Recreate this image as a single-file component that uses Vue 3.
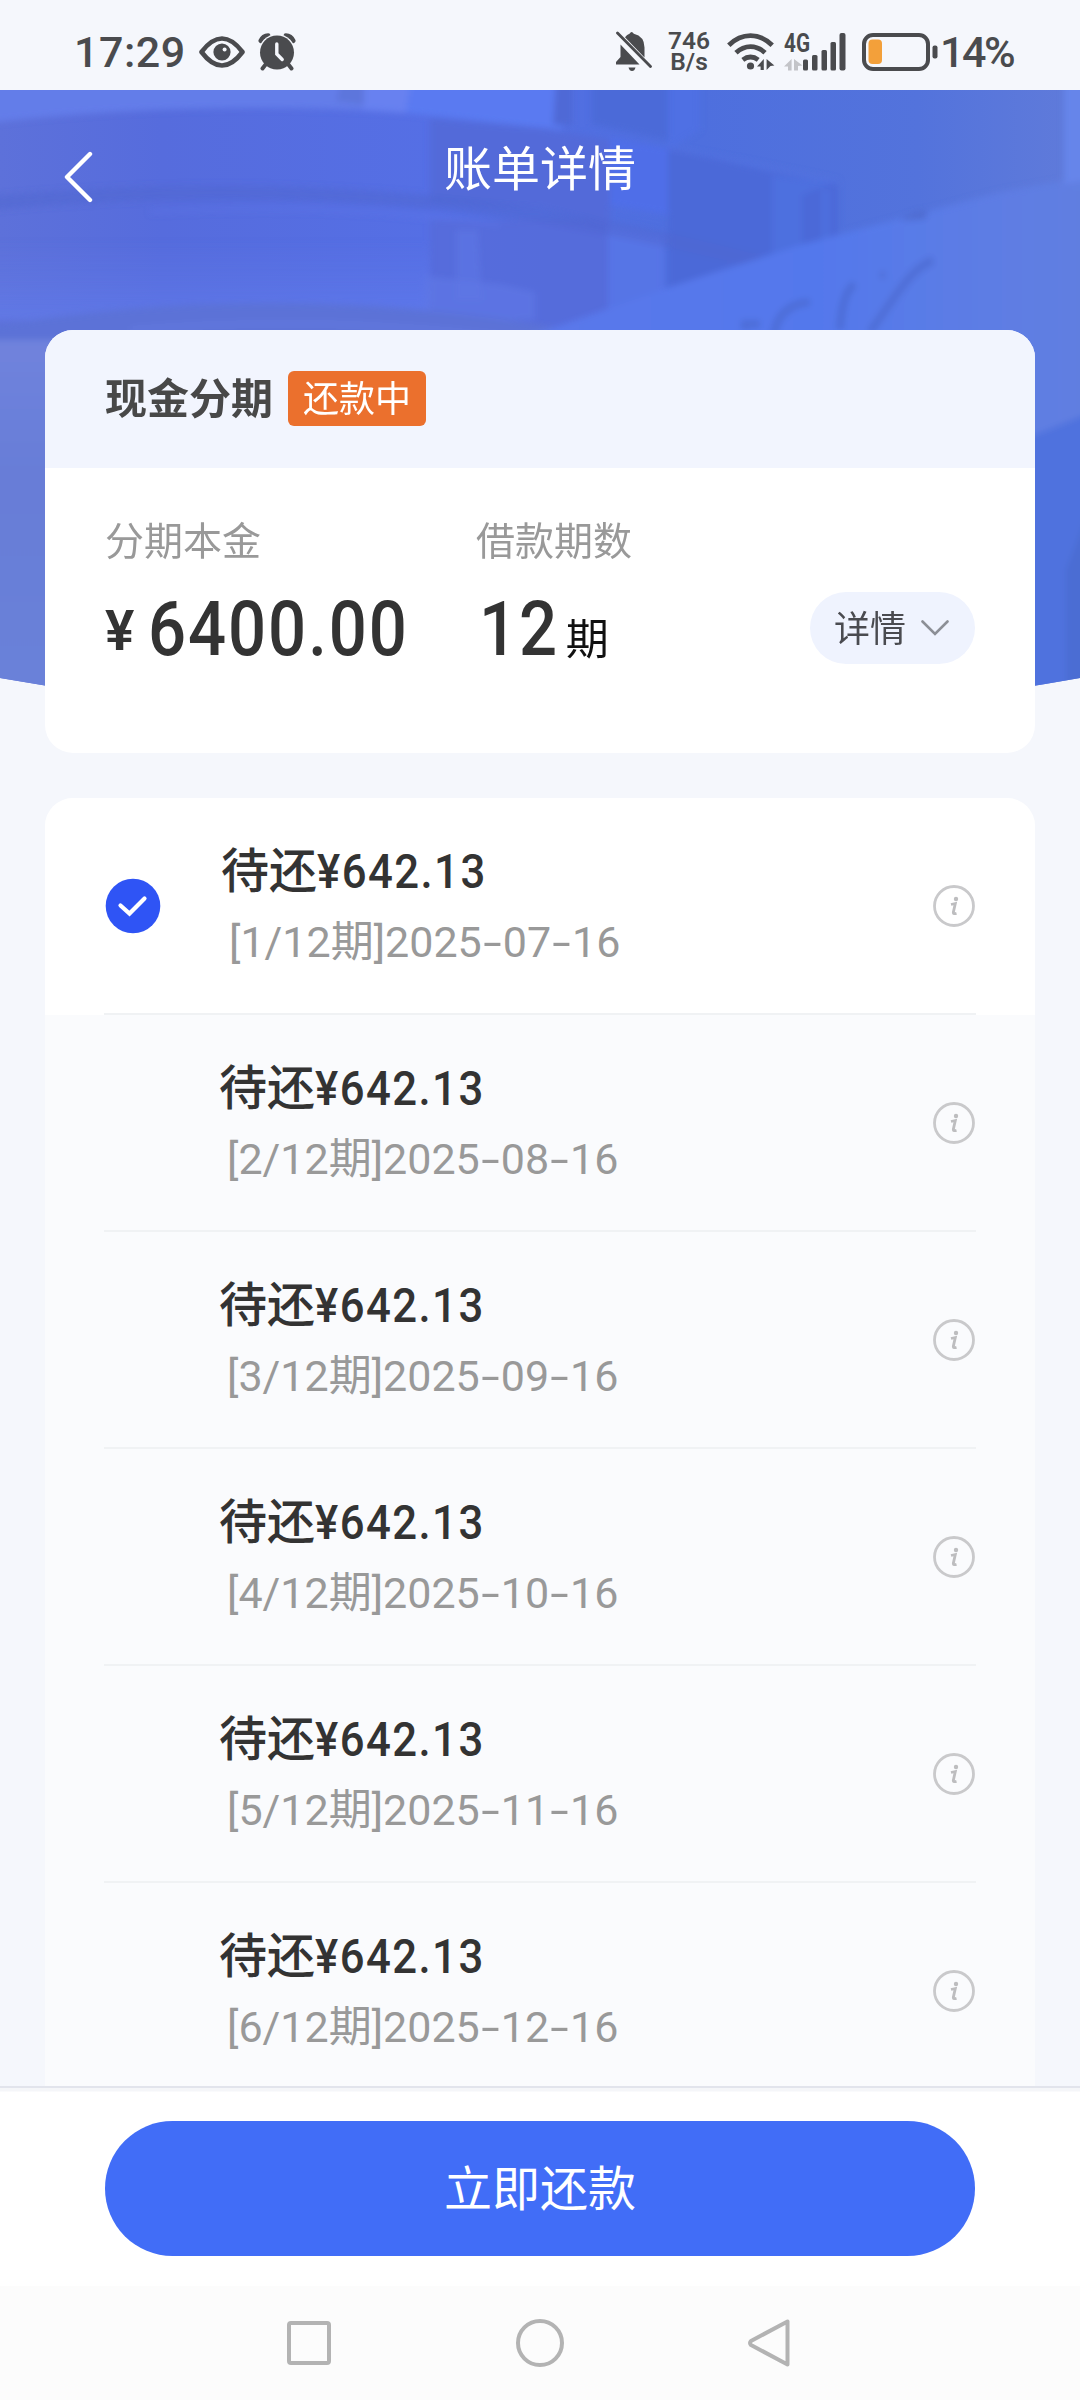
<script setup>

import { ref } from 'vue';

const bills = ref([]);

for (let i = 1; i <= 6; i++) {
    const month = String(i + 6).padStart(2, '0');
    bills.value.push({
        term: i,
        amount: '642.13',
        year: '2025',
        month: month,
        day: '16',
        checked: i === 1
    });
}

const handleSelect = (bill) => {
    bill.checked = !bill.checked;
}
</script>

<template>
    <div class="page">
        <div class="status-bar">
            <span class="time">17:29</span>
            <svg class="eye" width="46" height="32" viewBox="0 0 46 32">
                <path d="M2.5 16C10 6 17 2.5 23 2.5S36 6 43.5 16C36 26 29 29.5 23 29.5S10 26 2.5 16Z" fill="none" stroke="#4a4b4e" stroke-width="4.6" stroke-linejoin="round" />
                <circle cx="23" cy="16" r="8.6" fill="#4a4b4e" />
                <circle cx="25.6" cy="13.4" r="2" fill="#f5f7fc" />
            </svg>
            <svg class="alarm" width="38" height="38" viewBox="0 0 38 38">
                <path d="M2.8 7.8Q5 2.8 10.2 2.6M35.2 7.8Q33 2.8 27.8 2.6" fill="none" stroke="#4a4b4e" stroke-width="4.6" stroke-linecap="round" />
                <circle cx="19" cy="19.5" r="18.4" fill="#f5f7fc" />
                <path d="M8 31L4.5 35.5M30 31L33.5 35.5" stroke="#4a4b4e" stroke-width="4" stroke-linecap="round" />
                <circle cx="19" cy="19.5" r="17" fill="#4a4b4e" />
                <path d="M18.8 11V21L24.2 26.5" fill="none" stroke="#f5f7fc" stroke-width="3.4" stroke-linecap="round" />
            </svg>
            <span class="spacer"></span>
            <svg class="bell" width="36" height="41" viewBox="0 0 36 41">
                <path d="M4.5 13.5L23.5 33.5H0V31L4.5 26Z" fill="#4a4b4e" />
                <path d="M9 6.2Q11 3.5 13.5 2.8Q15.6-1 17.8 2.8Q28.5 5.5 28.5 16.5V26.5Z" fill="#4a4b4e" />
                <path d="M12.5 36.5H19.5Q18.5 40 16 40T12.5 36.5Z" fill="#4a4b4e" />
                <path d="M1.5 2L34.5 35.5" stroke="#4a4b4e" stroke-width="2.8" stroke-linecap="round" />
            </svg>
            <div class="speed">
                <span>746</span>
                <span>B/s</span>
            </div>
            <svg class="wifi" width="48" height="38" viewBox="0 0 48 38">
                <g fill="none" stroke="#4a4b4e" stroke-width="4.8">
                    <path d="M1.8 12.2Q11.5 2.6 23.5 2.6T45.2 12.2" />
                    <path d="M9 19.8Q15.5 13.6 23.5 13.6T38 19.8" />
                    <path d="M15.8 26.8Q19.5 24 23.5 24T31.2 26.8" />
                </g>
                <circle cx="23.5" cy="33" r="3.6" fill="#4a4b4e" />
                <path d="M36.8 26V37H33.6V33.5H30L36.8 26ZM39.6 26L47.4 32.5L43.5 33L39.6 37Z" fill="#4a4b4e" />
            </svg>
            <svg class="signal" width="62" height="38" viewBox="0 0 62 38">
                <text x="0" y="18.5" class="net" textLength="26" lengthAdjust="spacingAndGlyphs">4G</text>
                <path d="M7.6 26V37.5H4V33.5H0L7.6 26ZM10 26L18.5 32.5L14 33V37.5H10Z" fill="#c3c4c8" />
                <g fill="#4a4b4e">
                    <rect x="19" y="26.5" width="5" height="11" rx="1.5" />
                    <rect x="28" y="22" width="5.5" height="15.5" rx="1.5" />
                    <rect x="37.5" y="17" width="5.5" height="20.5" rx="1.5" />
                    <rect x="46.5" y="9" width="5.5" height="28.5" rx="1.5" />
                    <rect x="55.5" y="0" width="6" height="37.5" rx="2" />
                </g>
            </svg>
            <svg class="battery" width="77" height="38" viewBox="0 0 77 38">
                <rect x="2" y="2" width="64" height="34" rx="9" fill="none" stroke="#4a4b4e" stroke-width="4" />
                <rect x="6.5" y="6.5" width="13.5" height="24.5" rx="4" fill="#f3a03a" />
                <rect x="70.5" y="12.5" width="5" height="13" rx="2" fill="#4a4b4e" />
            </svg>
            <span class="percent">14%</span>
        </div>

        <div class="header">
            <svg class="header-bg" width="1080" height="640" viewBox="0 90 1080 640">
                <defs>
                    <linearGradient id="base" x1="0" x2="1" y1="0" y2="0">
                        <stop offset="0" stop-color="#5d71da" />
                        <stop offset="0.15" stop-color="#566cdd" />
                        <stop offset="0.4" stop-color="#556fe5" />
                        <stop offset="0.65" stop-color="#4e6fde" />
                        <stop offset="0.85" stop-color="#5373dc" />
                        <stop offset="1" stop-color="#607bda" />
                    </linearGradient>
                    <linearGradient id="glow" x1="0" x2="0" y1="0" y2="1">
                        <stop offset="0" stop-color="#6680f0" stop-opacity="0" />
                        <stop offset="1" stop-color="#6680f0" stop-opacity="0.5" />
                    </linearGradient>
                    <linearGradient id="wall" x1="0" x2="1" y1="0" y2="0">
                        <stop offset="0" stop-color="#5b78ea" />
                        <stop offset="0.5" stop-color="#5378ec" />
                        <stop offset="0.8" stop-color="#5d7de4" />
                        <stop offset="1" stop-color="#617fe0" />
                    </linearGradient>
                    <linearGradient id="left-side" x1="0" x2="0" y1="0" y2="1">
                        <stop offset="0" stop-color="#7083dd" />
                        <stop offset="0.35" stop-color="#677dd7" />
                        <stop offset="1" stop-color="#6b83da" />
                    </linearGradient>
                    <clipPath id="arc">
                        <path d="M0 90H1080V678Q540 774 0 678Z" />
                    </clipPath>
                    <filter id="soft" x="-5%" y="-5%" width="110%" height="110%">
                        <feGaussianBlur stdDeviation="3" />
                    </filter>
                </defs>
                <g clip-path="url(#arc)">
                    <rect y="90" width="1080" height="640" fill="url(#base)" />
                    <g filter="url(#soft)">
                        <path d="M-20 70H412L406 112Q180 100 -20 124Z" fill="#637de9" />
                        <path d="M412 70H562V130L406 113Z" fill="#5a7af1" />
                        <path d="M366 70H413L406 113L362 110Z" fill="#6881f0" />
                        <path d="M342 80H364V105L336 101Z" fill="#5d76dc" />
                        <path d="M556 80H572V125H553Z" fill="#5069d6" />
                        <path d="M592 80H668V140L592 124Z" fill="#4c6ad8" />
                        <path d="M430 118L540 128L610 140V225L540 208L430 202Z" fill="#526bd9" />
                        <path d="M610 138L668 148V215L610 205Z" fill="#506ee8" />
                        <path d="M668 80H700V130L668 150Z" fill="#5071ea" opacity="0.5" />
                        <path d="M668 147L770 172L838 184V242L668 292Z" fill="#4c69d8" />
                        <path d="M772 176L835 182L802 195V248L772 255Z" fill="#4e70df" />
                        <path d="M822 190H829V240H822Z" fill="#5071df" />
                        <path d="M668 148Q760 165 838 182" fill="none" stroke="#5674e3" stroke-width="3" opacity="0.7" />
                        <path d="M430 220H610V330H430Z" fill="#566ada" opacity="0.8" />
                        <path d="M-20 240H430V320H-20Z" fill="url(#glow)" />
                        <path d="M608 225L664 236V330H608Z" fill="#5775e6" />
                        <path d="M456 230H478L482 300H456Z" fill="#5d76e4" opacity="0.7" />
                        <path d="M425 276L500 284L535 292V320H425Z" fill="#6078e5" opacity="0.7" />
                        <path d="M-20 204Q210 182 430 202Q570 214 760 262" fill="none" stroke="#4e66d0" stroke-width="14" opacity="0.5" />
                        <path d="M150 212Q350 202 500 226" fill="none" stroke="#5f78ec" stroke-width="4" opacity="0.4" />
                        <path d="M-20 328Q270 278 560 328V370H-20Z" fill="#5c72d7" />
                        <path d="M130 330Q350 312 560 345" fill="none" stroke="#6279e0" stroke-width="8" opacity="0.6" />
                        <path d="M530 336L670 287L800 245L1000 192L1100 174V800H530Z" fill="url(#wall)" />
                        <path d="M1064 80H1100V178L1064 184Z" fill="#6685ea" />
                        <path d="M900 221Q915 210 928 211L925 219Z" fill="#4d69ca" opacity="0.8" />
                        <g fill="none" stroke="#4c69d0" stroke-width="8" opacity="0.7">
                            <path d="M745 330V324H760M774 335Q778 305 810 302M840 330Q842 292 855 284" />
                            <path d="M870 332C900 290 910 270 933 260M880 275H885" />
                        </g>
                        <path d="M-20 340H60V750H-20Z" fill="url(#left-side)" />
                        <path d="M1020 440Q1050 430 1100 408V750H1020Z" fill="#4f72de" />
                        <path d="M1066 570V690H1100V480Z" fill="#4c6dd3" />
                    </g>
                </g>
            </svg>
            <div class="nav">
                <svg class="back" width="30" height="54" viewBox="0 0 30 54">
                    <path d="M26 4L3 27L26 50" fill="none" stroke="#fff" stroke-width="4.4" stroke-linecap="round" stroke-linejoin="round" />
                </svg>
                <div class="title">账单详情</div>
            </div>
        </div>

        <div class="summary">
            <div class="summary-header">
                <span class="product">现金分期</span>
                <span class="badge">还款中</span>
            </div>
            <div class="summary-body">
                <div class="item principal">
                    <div class="label">分期本金</div>
                    <div class="value">
                        <span class="yen">¥</span>
                        <span class="digits">6400.00</span>
                    </div>
                </div>
                <div class="item">
                    <div class="label">借款期数</div>
                    <div class="value periods">
                        <span class="digits">12</span>
                        <span class="unit">期</span>
                    </div>
                </div>
                <div class="detail-btn">
                    <span>详情</span>
                    <svg width="28" height="17" viewBox="0 0 28 17">
                        <path d="M1.5 1.5L14 14L26.5 1.5" fill="none" stroke="#8c8f96" stroke-width="2.6" stroke-linecap="round" />
                    </svg>
                </div>
            </div>
        </div>

        <div class="list">
            <div v-for="(bill, index) in bills" :key="bill.term" class="row" :class="{ current: index === 0 }" @click="handleSelect(bill)">
                <div class="check">
                    <svg v-if="bill.checked" width="56" height="56" viewBox="0 0 56 56">
                        <circle cx="28" cy="28" r="27.3" fill="#2f54f5" />
                        <path d="M15.5 27.5L24.5 35.5L39.5 20.5" fill="none" stroke="#fff" stroke-width="4.2" stroke-linecap="round" />
                    </svg>
                </div>
                <div class="info">
                    <div class="amount">待还<span class="num">¥{{ bill.amount }}</span></div>
                    <div class="term">[{{ bill.term }}/12期]{{ bill.year }}<i class="dash">-</i>{{ bill.month }}<i class="dash">-</i>{{ bill.day }}</div>
                </div>
                <svg class="tip" width="42" height="42" viewBox="0 0 42 42">
                    <circle cx="21" cy="21" r="19.5" fill="none" stroke="#c9c9cb" stroke-width="2.8" />
                    <circle cx="23" cy="14" r="2.2" fill="#bdbdbf" />
                    <path d="M18 19.5L22.3 18.5L20.3 27.5Q20.2 29.3 23.5 28.3" fill="none" stroke="#bdbdbf" stroke-width="2.8" />
                </svg>
            </div>
        </div>

        <div class="footer">
            <div class="pay-btn">立即还款</div>
        </div>

        <div class="system-nav">
            <svg width="50" height="50" viewBox="0 0 50 50">
                <rect x="5" y="5" width="40" height="40" rx="2" />
            </svg>
            <svg width="50" height="50" viewBox="0 0 50 50">
                <circle cx="25" cy="25" r="22" />
            </svg>
            <svg width="50" height="50" viewBox="0 0 50 50">
                <path d="M41.5 3.5V46.5L5 27Q3 25 5 23Z" />
            </svg>
        </div>
    </div>
</template>

<style>
body {
    margin: 0;
    background: #f5f7fc;
}
</style>

<style scoped>
.page {
    display: flex;
    flex-direction: column;
    width: 1080px;
    height: 2400px;
    overflow: hidden;
    background: #f5f7fc;
    color: #333;
    font-family: Roboto, 'Noto Sans CJK SC', sans-serif;
}

/* status bar */
.status-bar {
    display: flex;
    align-items: center;
    box-sizing: border-box;
    height: 90px;
    padding: 13px 65px 0 74px;
    flex-shrink: 0;
    color: #4a4b4e;
}
.time {
    width: 125px;
    font-size: 43px;
    font-weight: 500;
    letter-spacing: 0.5px;
    line-height: 50px;
}
.alarm {
    margin-left: 13px;
}
.spacer {
    flex: 1;
}
.speed {
    display: flex;
    flex-direction: column;
    align-items: center;
    width: 44px;
    margin-left: 15px;
    margin-right: 1px;
    font-size: 24.5px;
    font-weight: 600;
    line-height: 20.5px;
}
.wifi {
    margin-left: 15px;
}
.signal {
    margin-left: 9px;
    margin-right: 1px;
    overflow: visible;
}
.net {
    font-size: 25px;
    font-weight: 700;
    fill: #4a4b4e;
}
.battery {
    margin-left: 15px;
}
.percent {
    width: 75px;
    margin-left: 1px;
    font-size: 43px;
    font-weight: 500;
    letter-spacing: -2.5px;
    line-height: 50px;
    white-space: nowrap;
}

/* header */
.header {
    position: relative;
    height: 240px;
    flex-shrink: 0;
}
.header-bg {
    position: absolute;
    top: 0;
    left: 0;
}
.nav {
    position: relative;
    display: grid;
    grid-template-columns: 1fr auto 1fr;
    align-items: center;
    height: 158px;
}
.back {
    margin: 15px 0 0 64px;
}
.title {
    padding-top: 1px;
    color: #fff;
    font-size: 48px;
    line-height: 64px;
}

/* summary card */
.summary {
    position: relative;
    height: 423px;
    margin: 0 45px;
    flex-shrink: 0;
    border-radius: 28px;
    overflow: hidden;
    background: #fff;
}
.summary-header {
    display: flex;
    align-items: center;
    box-sizing: border-box;
    height: 138px;
    padding: 0 60px;
    background: #f2f5fe;
}
.product {
    padding-top: 2px;
    color: #484848;
    font-size: 42px;
    font-weight: 700;
    line-height: 56px;
}
.badge {
    height: 55px;
    margin: -1px 0 0 15px;
    padding: 0 15px;
    border-radius: 6px;
    background: #eb702d;
    color: #fff;
    font-size: 36px;
    line-height: 58px;
}
.summary-body {
    display: flex;
    padding: 46px 60px 0;
}
.principal {
    width: 371px;
}
.label {
    color: #999;
    font-size: 39px;
    line-height: 56px;
}
.value {
    display: flex;
    align-items: baseline;
    height: 90px;
    margin-top: 14px;
    font-weight: 500;
    line-height: 90px;
    white-space: nowrap;
}
/* narrow figures */
.digits {
    font-size: 76px;
    letter-spacing: 2.2px;
    transform: scaleX(0.882);
    transform-origin: 0 50%;
}
.yen {
    width: 43px;
    font-size: 55px;
    font-weight: 600;
    transform: translateY(-5px);
    transform-origin: 0 50%;
}
.periods {
    padding-left: 3px;
}
.unit {
    margin-left: -4px;
    color: #111;
    font-size: 43px;
    font-weight: 400;
}
.detail-btn {
    display: flex;
    align-items: center;
    box-sizing: border-box;
    width: 165px;
    height: 72px;
    margin: 78px 0 0 auto;
    padding: 0 26px 0 24px;
    justify-content: space-between;
    border-radius: 36px;
    background: #eff3fe;
    color: #4a4b50;
    font-size: 36px;
    line-height: 52px;
}
.detail-btn span {
    padding-top: 3px;
}

/* bills */
.list {
    flex: 1;
    min-height: 0;
    margin: 45px 45px 0;
    border-radius: 28px 28px 0 0;
    overflow: hidden;
    background: #fafbfd;
}
.row {
    position: relative;
    display: flex;
    align-items: center;
    box-sizing: border-box;
    height: 217px;
    padding: 0 60px;
}
.row::after {
    position: absolute;
    right: 59px;
    bottom: 0;
    left: 59px;
    height: 2px;
    background: #f0f2f4;
    content: '';
}
.row.current {
    background: #fff;
}
.check {
    width: 114px;
    height: 56px;
    margin-bottom: 1px;
}
.current .check {
    width: 116px;
}
.tip {
    margin-bottom: 2px;
}
.info {
    flex: 1;
    padding-top: 2px;
}
.amount {
    font-size: 48px;
    font-weight: 500;
    line-height: 70px;
}
.num {
    display: inline-block;
    letter-spacing: 1.6px;
    transform: scaleX(0.91);
    transform-origin: 0 50%;
}
.term {
    padding-left: 8px;
    color: #999;
    font-size: 43px;
    line-height: 71px;
}
.dash {
    display: inline-block;
    width: 21px;
    font-style: normal;
    text-align: center;
    transform: scaleX(1.55);
}

/* footer */
.footer {
    box-sizing: border-box;
    height: 200px;
    padding: 33px 105px 0;
    flex-shrink: 0;
    border-top: 2px solid #e2e4ec;
    background: linear-gradient(#f5f6f9 0, #f5f6f9 3px, #fff 4px);
}
.pay-btn {
    height: 135px;
    border-radius: 68px;
    background: #416df7;
    color: #fff;
    font-size: 48px;
    line-height: 138px;
    text-align: center;
}
.system-nav {
    display: flex;
    justify-content: center;
    gap: 181px;
    box-sizing: border-box;
    height: 114px;
    padding-top: 32px;
    flex-shrink: 0;
    background: #fcfcfc;
}
.system-nav svg {
    fill: none;
    stroke: #b3b3b3;
    stroke-width: 4px;
    stroke-linejoin: round;
}
</style>
